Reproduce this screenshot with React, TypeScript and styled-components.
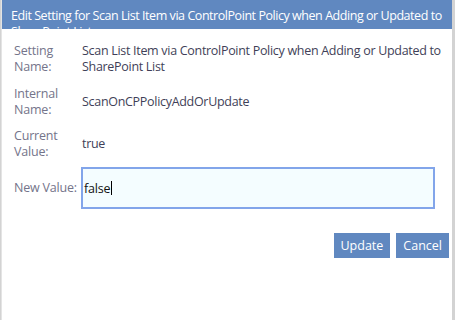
import React from "react";
import styled, { createGlobalStyle } from "styled-components";

const Global = createGlobalStyle`
  html, body { margin: 0; padding: 0; background: #d3d3d3; }
  body { font-family: "Open Sans", "Noto Sans", Arial, sans-serif; }
`;

const Frame = styled.div`
  display: flex;
  height: 320px;
  width: 455px;
  box-sizing: border-box;
  padding-left: 1px;
  padding-right: 3px;
  background: #d3d3d3;
`;

const Dialog = styled.div`
  flex: 1;
  display: flex;
  flex-direction: column;
  background: #ffffff;
  border-left: 1px solid #e4e4e4;
`;

const TitleBar = styled.div`
  height: 29px;
  box-sizing: border-box;
  overflow: hidden;
  background: #6088c0;
  color: #ffffff;
  font-size: 12.5px;
  letter-spacing: -0.45px;
  line-height: 16px;
  padding: 8px 2px 0 9px;
`;

const Body = styled.div`
  display: flex;
  flex-direction: column;
  padding: 14px 3px 0 12px;
`;

const Form = styled.div`
  display: flex;
  flex-direction: column;
`;

const Row = styled.div<{ $gap: number }>`
  display: grid;
  grid-template-columns: 68px 1fr;
  align-items: center;
  margin-top: ${(p) => p.$gap}px;
`;

const Label = styled.div`
  color: #74748a;
  font-size: 12.5px;
  letter-spacing: -0.2px;
  line-height: 16px;
  padding-right: 2px;
`;

const Value = styled.div`
  color: #3f3f58;
  font-size: 12.5px;
  line-height: 16px;
  letter-spacing: -0.3px;
`;

const Field = styled.div`
  height: 42px;
  width: 354px;
  box-sizing: border-box;
  border: 2px solid #82a5ea;
  background: #f4fdff;
  display: flex;
  align-items: center;
  padding-left: 1px;
  color: #111111;
  font-size: 12.5px;
  letter-spacing: -0.2px;
  margin-left: -1px;
`;

const Caret = styled.span`
  display: inline-block;
  width: 1px;
  height: 14px;
  background: #000000;
  margin-left: 1px;
`;

const Footer = styled.div`
  display: flex;
  justify-content: flex-end;
  gap: 6px;
  margin-top: 24px;
`;

const Button = styled.button`
  height: 25px;
  border: none;
  background: #6088c0;
  color: #ffffff;
  font-family: inherit;
  font-size: 12.5px;
  padding: 0 7px;
  margin: 0;
  cursor: pointer;
`;

export default function App() {
  return (
    <>
      <Global />
      <Frame>
        <Dialog>
          <TitleBar>
            Edit Setting for Scan List Item via ControlPoint Policy when Adding or Updated to SharePoint List
          </TitleBar>
          <Body>
            <Form>
              <Row $gap={0}>
                <Label>Setting Name:</Label>
                <Value>
                  Scan List Item via ControlPoint Policy when Adding or Updated to SharePoint List
                </Value>
              </Row>
              <Row $gap={11}>
                <Label>Internal Name:</Label>
                <Value>ScanOnCPPolicyAddOrUpdate</Value>
              </Row>
              <Row $gap={10}>
                <Label>Current Value:</Label>
                <Value>true</Value>
              </Row>
              <Row $gap={7}>
                <Label>New Value:</Label>
                <Field>
                  false
                  <Caret />
                </Field>
              </Row>
            </Form>
            <Footer>
              <Button>Update</Button>
              <Button>Cancel</Button>
            </Footer>
          </Body>
        </Dialog>
      </Frame>
    </>
  );
}
